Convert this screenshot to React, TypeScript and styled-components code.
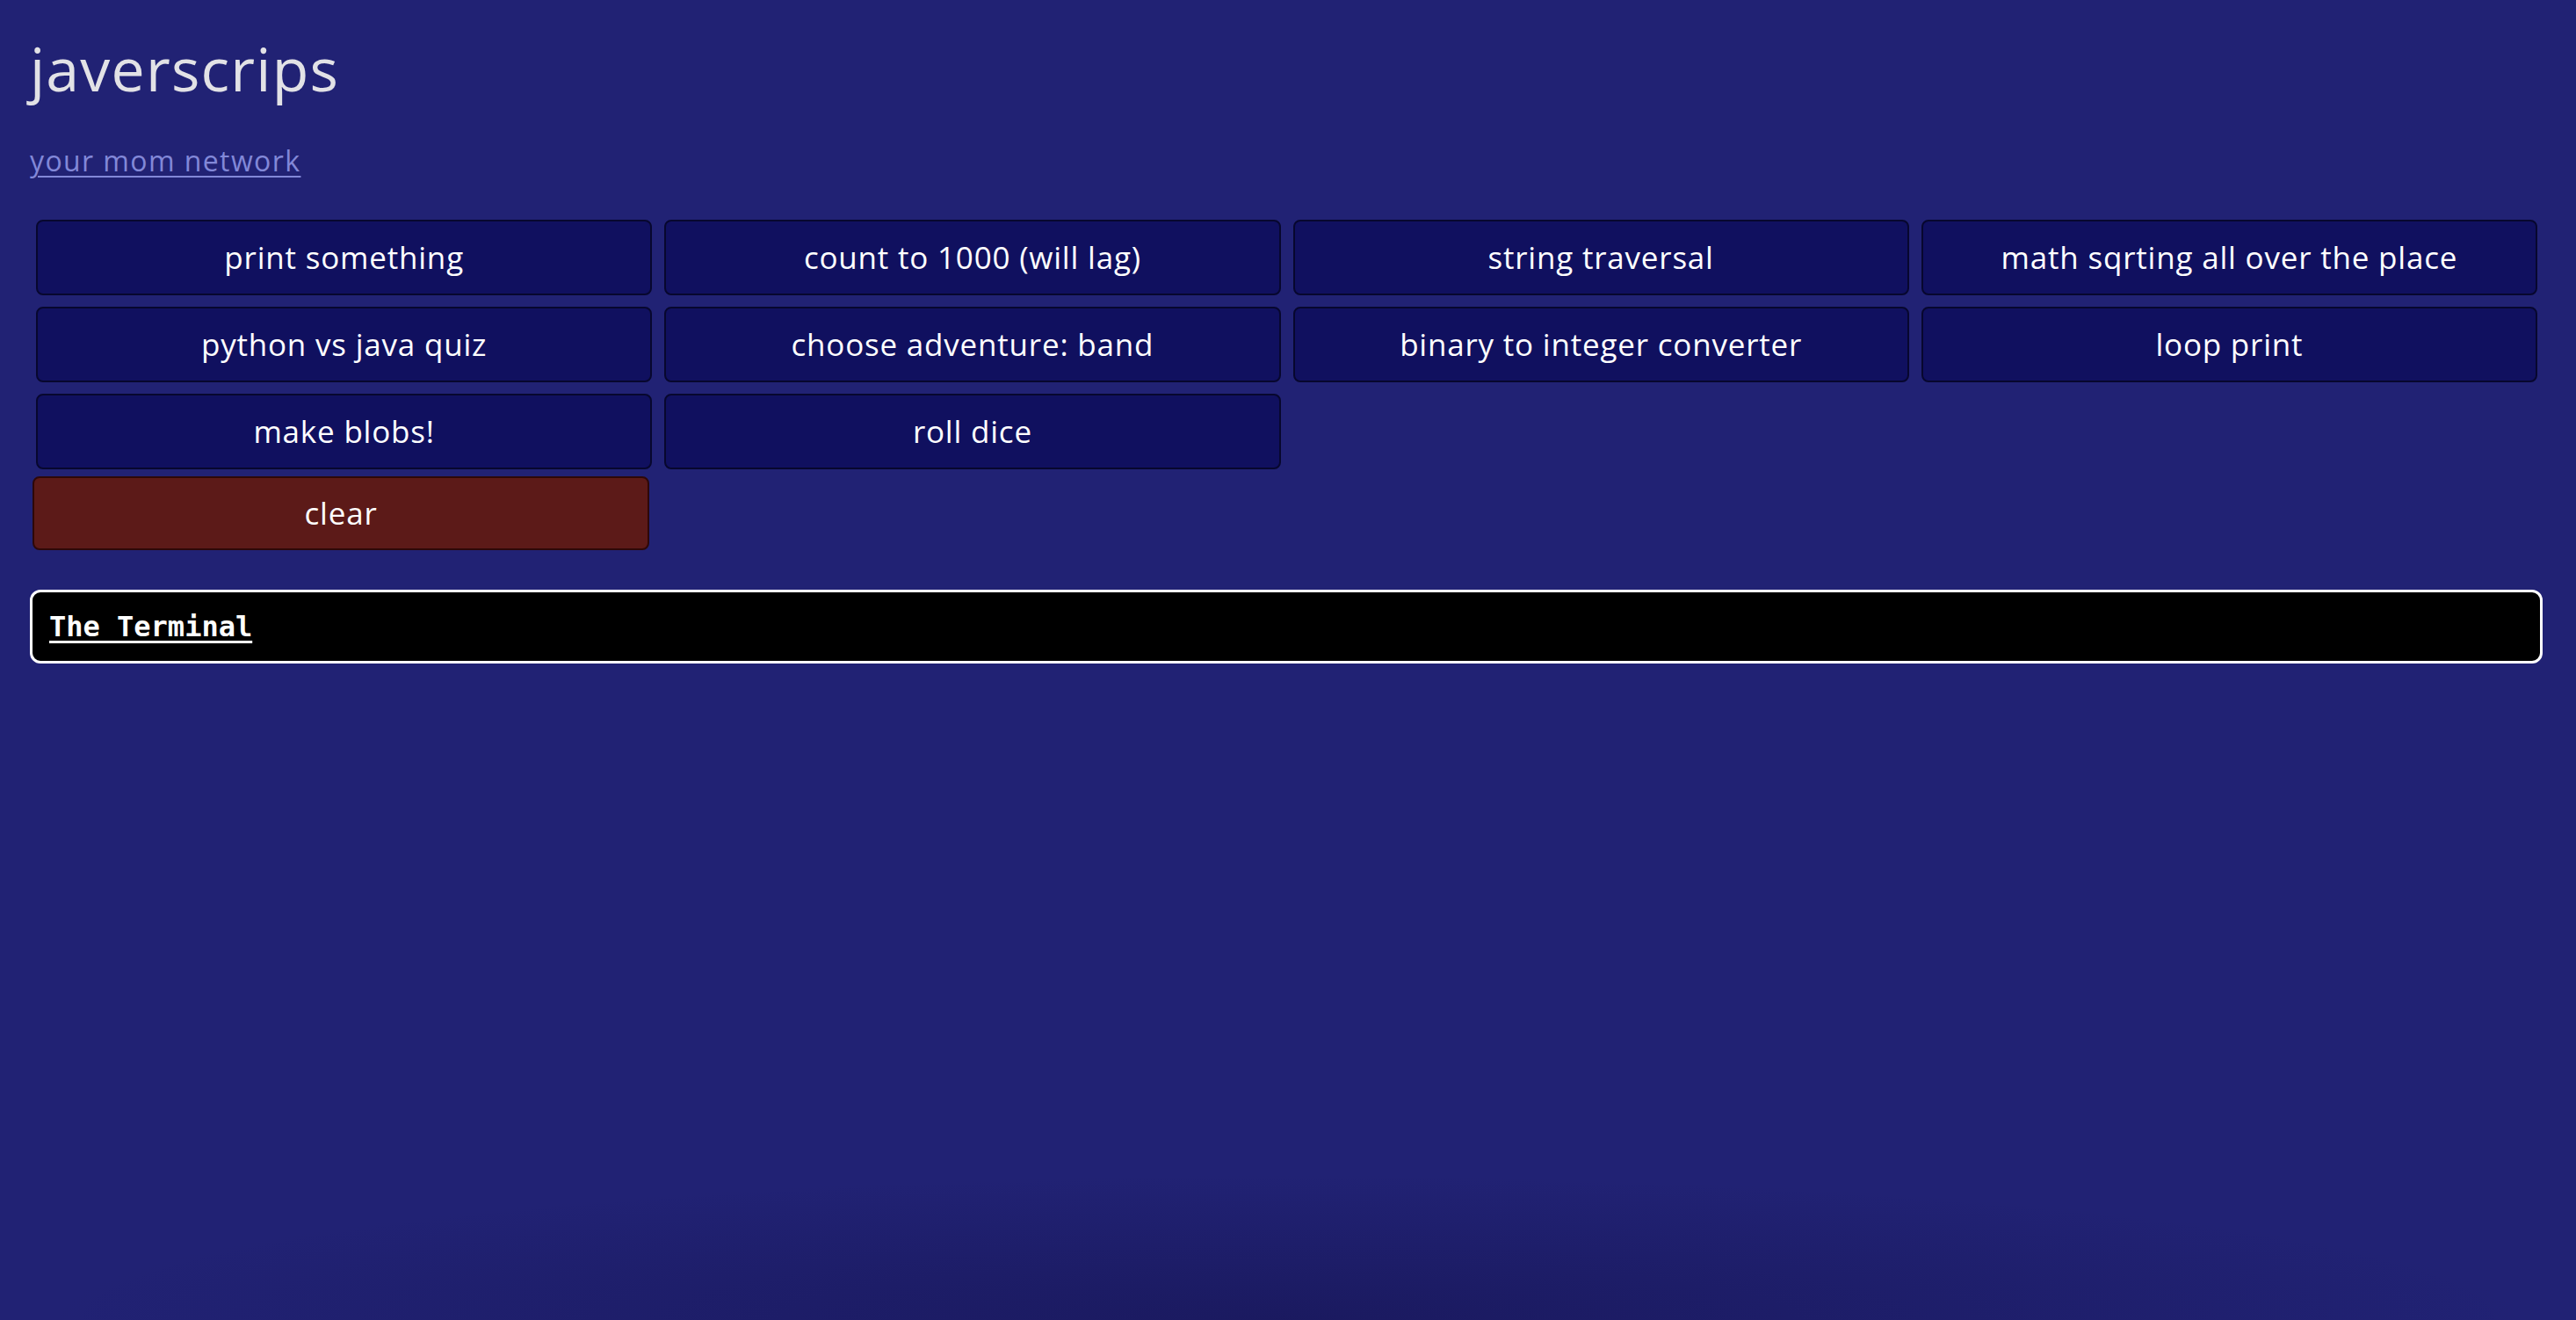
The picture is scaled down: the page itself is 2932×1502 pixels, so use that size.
import React from "react";
import styled, { createGlobalStyle } from "styled-components";

const GlobalStyle = createGlobalStyle`
  html, body {
    margin: 0;
    padding: 0;
    height: 100%;
  }
  body {
    background-color: #212274;
    font-family: "Open Sans", "Noto Sans", sans-serif;
    color: #ffffff;
  }
  #root {
    min-height: 100vh;
  }
`;

const Page = styled.main`
  min-height: 100vh;
  box-sizing: border-box;
  padding: 34px 38px 40px 34px;
  background:
    radial-gradient(ellipse 48% 11% at 50% 100%, rgba(22, 20, 82, 0.6), rgba(22, 20, 82, 0) 100%),
    #212274;
`;

const Title = styled.h1`
  margin: 0;
  font-family: "Open Sans", sans-serif;
  font-weight: 400;
  font-size: 68px;
  line-height: 1.3;
  color: #e2e2e6;
  letter-spacing: 1.2px;
`;

const NavLink = styled.a`
  display: inline-block;
  margin-top: 40px;
  font-family: "Open Sans", sans-serif;
  font-size: 32px;
  line-height: 1.3;
  color: #8288d8;
  text-decoration: underline;
  text-decoration-thickness: 2px;
  text-underline-offset: 5px;
  letter-spacing: 1.4px;
`;

const ButtonGrid = styled.div`
  display: grid;
  grid-template-columns: repeat(4, 1fr);
  column-gap: 14px;
  row-gap: 13px;
  margin-top: 46px;
  padding: 0 6px 0 7px;
`;

const ScriptButton = styled.button<{ $danger?: boolean }>`
  height: 86px;
  box-sizing: border-box;
  border-radius: 8px;
  border: 2px solid ${(p) => (p.$danger ? "#2e0808" : "#07072e")};
  background: ${(p) => (p.$danger ? "#5c1a18" : "#10105f")};
  color: #ffffff;
  font-family: "Open Sans", sans-serif;
  font-size: 35px;
  letter-spacing: 0.8px;
  cursor: pointer;
`;

const ClearRow = styled.div`
  display: grid;
  grid-template-columns: 702px;
  margin-top: 8px;
  padding-left: 3px;
`;

const ClearButton = styled(ScriptButton)`
  height: 84px;
`;

const Terminal = styled.section`
  margin-top: 45px;
  box-sizing: border-box;
  height: 84px;
  background: #000000;
  border: 3px solid #ffffff;
  border-radius: 12px;
  padding: 0 19px;
  display: flex;
  align-items: center;
`;

const TerminalTitle = styled.span`
  font-family: "DejaVu Sans Mono", "Liberation Mono", monospace;
  font-weight: 700;
  font-size: 32px;
  color: #ffffff;
  text-decoration: underline;
  text-decoration-thickness: 3px;
  text-underline-offset: 5px;
`;

const scripts = [
  "print something",
  "count to 1000 (will lag)",
  "string traversal",
  "math sqrting all over the place",
  "python vs java quiz",
  "choose adventure: band",
  "binary to integer converter",
  "loop print",
  "make blobs!",
  "roll dice",
];

export default function App() {
  return (
    <>
      <GlobalStyle />
      <Page>
        <Title>javerscrips</Title>
        <NavLink href="#">your mom network</NavLink>
        <ButtonGrid>
          {scripts.map((s) => (
            <ScriptButton key={s}>{s}</ScriptButton>
          ))}
        </ButtonGrid>
        <ClearRow>
          <ClearButton $danger>clear</ClearButton>
        </ClearRow>
        <Terminal>
          <TerminalTitle>The Terminal</TerminalTitle>
        </Terminal>
      </Page>
    </>
  );
}
